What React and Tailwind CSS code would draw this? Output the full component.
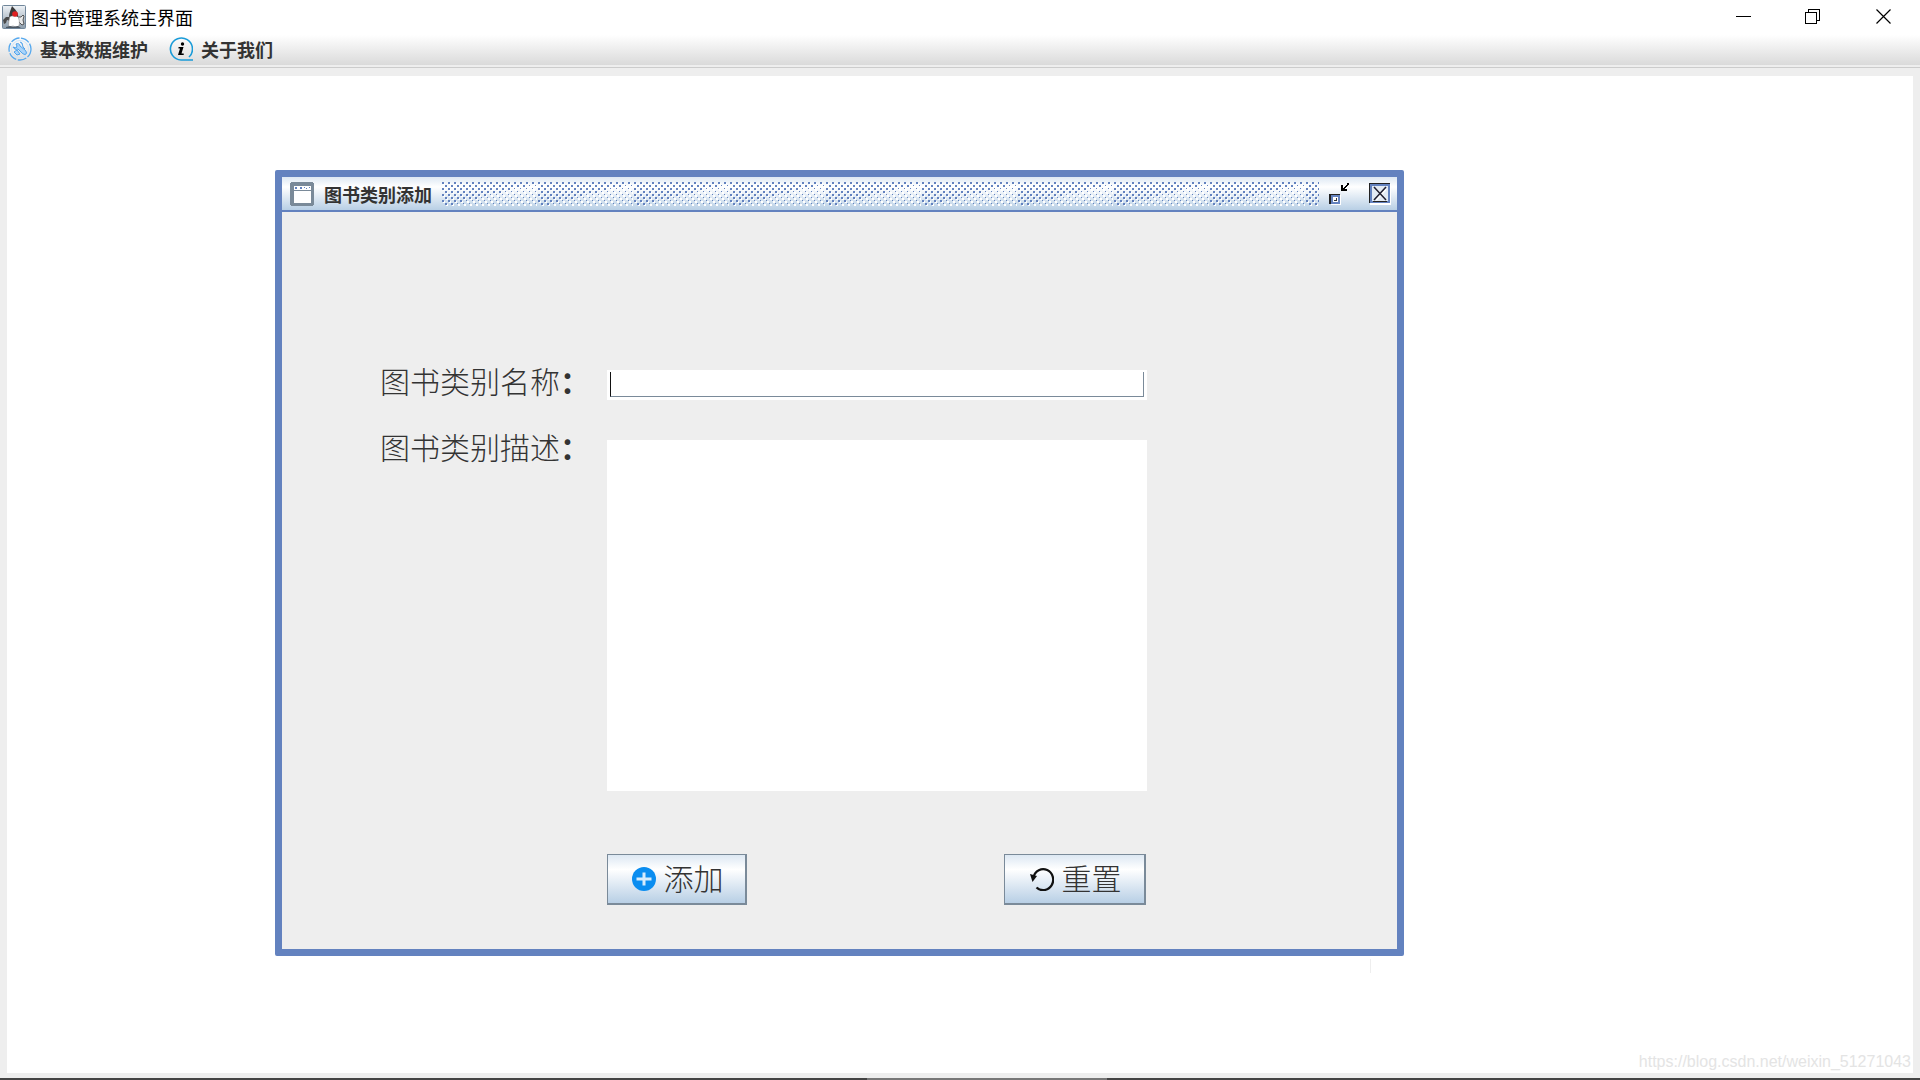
import { useState } from 'react'

const TILE_W = 96
const TILE_H = 24

// raised dots in the title bar, they get smaller below the diagonal of each tile
function makeBumps() {
  const bumps = []
  for (let row = 0; row < 8; row++) {
    for (let col = 0; col < 16; col++) {
      const x = col * 6 + (row % 2 ? 4 : 1)
      const y = row * 3
      const big = x / TILE_W + y / TILE_H < 1
      bumps.push({ x, y, size: big ? 2 : 1 })
    }
  }
  return bumps
}

const BUMPS = makeBumps()

function TitleBumps() {
  return (
    <svg className="h-6 min-w-0 flex-1" shapeRendering="crispEdges" aria-hidden="true">
      <defs>
        <pattern id="bumps" width={TILE_W} height={TILE_H} patternUnits="userSpaceOnUse">
          {BUMPS.map((b, i) => (
            <g key={i}>
              <rect x={b.x + 1} y={b.y + 1} width="2" height="2" fill="#fff" />
              <rect x={b.x} y={b.y} width={b.size} height={b.size} fill="#6382bf" />
            </g>
          ))}
        </pattern>
      </defs>
      <rect width="100%" height="24" fill="url(#bumps)" />
    </svg>
  )
}

function DukeIcon() {
  return (
    <svg className="size-6" viewBox="0 0 24 24" aria-hidden="true">
      <defs>
        <linearGradient id="duke" x1="0" y1="0" x2="0" y2="1">
          <stop offset="0" stopColor="#eef2f6" />
          <stop offset="1" stopColor="#8c9cab" />
        </linearGradient>
      </defs>
      <rect x="0.5" y="0.5" width="23" height="23" rx="1" fill="url(#duke)" stroke="#71869a" />
      <path d="M8 12 4 12 1 15l1 4 2-1 1-3 3 1z" fill="#4a4a4a" />
      <path d="M16 12l3 0 2-2 1 1-1 4 1 4-2 1-4-4z" fill="#e8e8e8" stroke="#333" strokeWidth="0.8" />
      <path d="M8 11c-1 4-2 8-1 11l4-1 3 1 3-1c1-4 0-7-1-10z" fill="#fff" stroke="#888" strokeWidth="0.6" />
      <path d="M10 1c-1 3-3 7-3 11l5-2 4 2c1-4-3-8-6-11z" fill="#3a3a3a" />
      <circle cx="13" cy="9" r="2.800" fill="#e02020" />
      <path d="m4 22 4-1 3 1 5-1 3 2H4z" fill="#4b5763" />
    </svg>
  )
}

function MaintainIcon() {
  return (
    <svg className="size-6" viewBox="0 0 24 24" fill="none" aria-hidden="true">
      <circle cx="12" cy="12" r="11" stroke="#55a8ee" strokeWidth="1.3" strokeDasharray="9 1.500" />
      <circle cx="12" cy="12" r="8.500" stroke="#c4e1fa" strokeWidth="0.8" />
      <path d="M8 7c2-1 4 0 4 2l5 4c1 1 2 3 1 4s-3 0-4-1l-4-4c-2 1-4 0-5-2l3 1 1-2z" fill="#a9d4fa" stroke="#4fa3ec" />
      <path d="m12 5 2 1 1 4 2 2M6 15l3-2 3 4-3 1z" fill="#a9d4fa" stroke="#4fa3ec" />
    </svg>
  )
}

function AboutIcon() {
  return (
    <svg className="size-6" viewBox="0 0 24 24" fill="none" aria-hidden="true">
      <path d="M20 20A11 11 0 1 0 12 23h12" stroke="#199bd8" strokeWidth="1.600" />
      <circle cx="13.500" cy="7" r="1.700" fill="#000" />
      <path d="M9.500 10h5l-2 6.500h2.200v1.500H9l2-6.500H9.500z" fill="#000" />
    </svg>
  )
}

function FrameIcon() {
  return (
    <svg className="size-6" viewBox="0 0 24 24" shapeRendering="crispEdges" aria-hidden="true">
      <path d="M1 0h22v1h1v22h-1v1H1v-1H0V1h1z" fill="#7a8a99" />
      <path d="M4 4h17v4H4zM4 9h17v12H4z" fill="#fff" />
      <path d="M5 5h2v2H5zM10 5h2v2h-2zM14 5h1v1h-1zM16 6h1v1h-1zM19 5h1v1h-1z" fill="#6382bf" />
    </svg>
  )
}

function RestoreFrameIcon() {
  return (
    <svg className="h-[22px] w-5" viewBox="0 0 20 22" shapeRendering="crispEdges" aria-hidden="true">
      <path d="M2 12h10v10H2z" fill="#fff" />
      <path d="M0 11h11v10H0z" fill="#222" />
      <path d="M2 12h9v9H2z" fill="#6382bf" />
      <path d="M4 14h5v5H4z" fill="#fff" />
      <path d="M7 15h1v3H5v-1h2z" fill="#333" />
      <path d="M12 2h2v3h1V4h1V3h1V2h1V0h2v2h-1v1h-1v1h-1v1h-1v1h2v2h-6z" fill="#000" />
    </svg>
  )
}

function CloseFrameIcon() {
  return (
    <svg className="h-[22px] w-[22px]" viewBox="0 0 22 22" shapeRendering="crispEdges" aria-hidden="true">
      <path d="M1 1h21v21H1z" fill="#fff" />
      <path d="M0 0h21v20H0z" fill="#222" />
      <path d="M1 1h20v19H1z" fill="#6382bf" />
      <path d="M3 3h16v15H3z" fill="#e3ebf4" />
      <path d="M4 18h14v1H4z" fill="#222" />
      <g shapeRendering="auto">
        <path d="m7 6 10 11M17 6 7 17" stroke="#fff" strokeWidth="2" />
        <path d="m5 4 12 13M17 4 5 17" stroke="#223" strokeWidth="1.600" />
      </g>
    </svg>
  )
}

function AddIcon() {
  return (
    <svg className="size-6" viewBox="0 0 24 24" aria-hidden="true">
      <circle cx="12" cy="12" r="12" fill="#0a8df0" />
      <path d="M10.500 5.500h3v5h6v3h-6v5h-3v-5h-6v-3h6z" fill="#d5ebfc" />
    </svg>
  )
}

function ResetIcon() {
  return (
    <svg className="size-6" viewBox="0 0 24 24" fill="none" aria-hidden="true">
      <path d="M3.500 10A10 10.500 0 1 1 6.500 20.500" stroke="#111" strokeWidth="2.200" />
      <path d="m0 7 7 2-4.500 6z" fill="#111" />
    </svg>
  )
}

const swingButton =
  'flex h-[51px] items-center justify-center gap-2 border border-r-2 border-b-2 border-[#7a8a99] bg-linear-to-b from-[#dde8f3] via-white via-30% to-[#b8cfe5] pl-[2px] text-3xl font-light text-[#333]'

function CategoryFrame() {
  const [name, setName] = useState('')
  const [desc, setDesc] = useState('')

  function reset() {
    setName('')
    setDesc('')
  }

  return (
    <section className="absolute top-[94px] left-[268px] w-[1129px] rounded-[2px] border-7 border-[#6382bf] bg-[#eee]">
      <header className="flex h-[35px] items-center border-b-2 border-[#6382bf] bg-linear-to-b from-[#dde8f3] via-white via-30% to-[#b8cfe5] pr-[6px] pl-2">
        <FrameIcon />
        <h1 className="mr-[9px] ml-[10px] text-lg leading-6 font-bold text-[#333]">图书类别添加</h1>
        <TitleBumps />
        <button type="button" aria-label="还原" className="ml-[10px]">
          <RestoreFrameIcon />
        </button>
        <button type="button" aria-label="关闭" className="ml-5">
          <CloseFrameIcon />
        </button>
      </header>

      <form
        className="grid grid-cols-[227px_540px] items-start pt-[158px] pb-11 pl-[98px]"
        onSubmit={e => e.preventDefault()}
      >
        <label htmlFor="name" className="text-3xl leading-5 font-light text-[#333]">
          图书类别名称<span className="font-bold">：</span>
        </label>
        <div className="h-[30px] bg-white pt-[2px] pr-[3px] pb-[3px] pl-[3px]">
          <input
            id="name"
            value={name}
            onChange={e => setName(e.target.value)}
            className="block h-full w-full border-r border-b border-l border-[#7a8a99] border-l-[#111] bg-white px-1 text-lg outline-none"
          />
        </div>

        <label htmlFor="desc" className="mt-9 text-3xl leading-5 font-light text-[#333]">
          图书类别描述<span className="font-bold">：</span>
        </label>
        <textarea
          id="desc"
          value={desc}
          onChange={e => setDesc(e.target.value)}
          className="mt-10 block h-[351px] w-full resize-none bg-white p-1 text-lg outline-none"
        />

        <div className="col-start-2 mt-[63px] flex justify-between pr-px">
          <button type="submit" className={`${swingButton} w-[140px]`}>
            <AddIcon />
            <span className="pb-1 leading-9">添加</span>
          </button>
          <button type="button" onClick={reset} className={`${swingButton} w-[142px]`}>
            <ResetIcon />
            <span className="pb-1 leading-9">重置</span>
          </button>
        </div>
      </form>
    </section>
  )
}

export default function App() {
  return (
    <div className="flex min-h-screen flex-col bg-[#eee] font-['Noto_Sans_CJK_SC',sans-serif]">
      <header className="flex h-[35px] items-center bg-white pb-[2px] pl-[2px]">
        <DukeIcon />
        <span className="ml-[5px] flex-1 text-lg leading-6 text-black">图书管理系统主界面</span>
        <button type="button" aria-label="最小化" className="flex w-[70px] justify-center">
          <svg className="size-4" viewBox="0 0 16 16" shapeRendering="crispEdges">
            <path d="M1 7h15v1H1z" />
          </svg>
        </button>
        <button type="button" aria-label="向下还原" className="flex w-[70px] justify-center">
          <svg className="size-4" viewBox="0 0 16 16" fill="none" stroke="#000" shapeRendering="crispEdges">
            <path d="M0.500 3.500h11v11h-11zM3.500 3V0.500h11v11H12" />
          </svg>
        </button>
        <button type="button" aria-label="关闭" className="flex w-[72px] justify-center">
          <svg className="size-4" viewBox="0 0 16 16" fill="none" stroke="#000" strokeWidth="1.200">
            <path d="m0.500 0.500 14 14M14.500 0.500l-14 14" />
          </svg>
        </button>
      </header>

      <nav className="flex h-[30px] items-center gap-[21px] bg-linear-to-b from-white to-[#dadada] pb-[2px] pl-2 text-lg leading-6 font-bold text-[#333]">
        <button type="button" className="flex items-center gap-2">
          <MaintainIcon />
          基本数据维护
        </button>
        <button type="button" className="flex items-center gap-2">
          <AboutIcon />
          关于我们
        </button>
      </nav>
      <div className="h-[3px] border-b border-[#ccc]" />

      <main className="relative mx-[7px] mt-2 mb-[5px] flex-1 bg-white">
        <CategoryFrame />
        <div className="absolute top-[883px] left-[1363px] h-[14px] w-px bg-[#eee]" />
        <span className="absolute right-[2px] bottom-[1px] font-['Liberation_Sans',sans-serif] text-base leading-5 text-[#e4e4e4]">
          https://blog.csdn.net/weixin_51271043
        </span>
      </main>

      <footer className="flex h-[2px] bg-[#444]">
        <div className="ml-[867px] w-60 bg-[#777]" />
      </footer>
    </div>
  )
}
